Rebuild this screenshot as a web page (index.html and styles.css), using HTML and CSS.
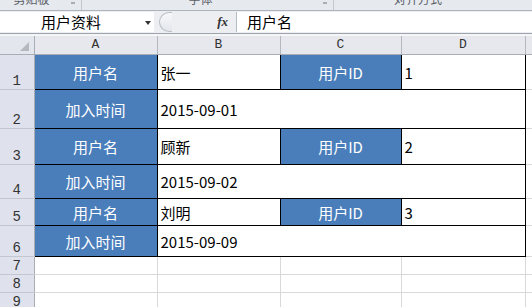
FILE: index.html
```html
<!DOCTYPE html>
<html lang="zh">
<head>
<meta charset="utf-8">
<link rel="stylesheet" href="styles.css">
</head>
<body>
<div class="app">
  <div class="ribbon">
    <div class="group g1"><span class="glabel">剪贴板</span><span class="launch"></span></div>
    <div class="group g2"><span class="glabel">字体</span><span class="launch"></span></div>
    <div class="group g3"><span class="glabel">对齐方式</span></div>
  </div>
  <div class="formula-bar">
    <div class="namebox"><span class="name">用户资料</span><span class="arrow"></span></div>
    <div class="handle"></div>
    <div class="fx">fx</div>
    <div class="input">用户名</div>
  </div>
  <div class="gap"></div>
  <table class="sheet">
    <colgroup>
      <col class="c-hdr"><col class="c-a"><col class="c-b"><col class="c-c"><col class="c-d"><col class="c-e">
    </colgroup>
    <tr class="h-hdr">
      <td class="corner"><span class="tri"></span></td>
      <td class="colhdr">A</td><td class="colhdr">B</td><td class="colhdr">C</td><td class="colhdr">D</td><td class="colhdr last"></td>
    </tr>
    <tr class="h1">
      <td class="rowhdr">1</td>
      <td class="lbl">用户名</td><td class="val">张一</td><td class="lbl">用户ID</td><td class="val">1</td><td class="grid"></td>
    </tr>
    <tr class="h2">
      <td class="rowhdr">2</td>
      <td class="lbl">加入时间</td><td class="val" colspan="3">2015-09-01</td><td class="grid"></td>
    </tr>
    <tr class="h3">
      <td class="rowhdr">3</td>
      <td class="lbl">用户名</td><td class="val">顾新</td><td class="lbl">用户ID</td><td class="val">2</td><td class="grid"></td>
    </tr>
    <tr class="h4">
      <td class="rowhdr">4</td>
      <td class="lbl">加入时间</td><td class="val" colspan="3">2015-09-02</td><td class="grid"></td>
    </tr>
    <tr class="h5">
      <td class="rowhdr">5</td>
      <td class="lbl">用户名</td><td class="val">刘明</td><td class="lbl">用户ID</td><td class="val">3</td><td class="grid"></td>
    </tr>
    <tr class="h6">
      <td class="rowhdr">6</td>
      <td class="lbl">加入时间</td><td class="val" colspan="3">2015-09-09</td><td class="grid"></td>
    </tr>
    <tr class="h7">
      <td class="rowhdr">7</td>
      <td class="grid"></td><td class="grid"></td><td class="grid"></td><td class="grid"></td><td class="grid"></td>
    </tr>
    <tr class="h7">
      <td class="rowhdr">8</td>
      <td class="grid"></td><td class="grid"></td><td class="grid"></td><td class="grid"></td><td class="grid"></td>
    </tr>
    <tr class="h7">
      <td class="rowhdr">9</td>
      <td class="grid"></td><td class="grid"></td><td class="grid"></td><td class="grid"></td><td class="grid"></td>
    </tr>
  </table>
</div>
</body>
</html>
```
FILE: styles.css
```css
html, body {
  margin: 0;
  padding: 0;
  background: #ffffff;
}
.app {
  width: 532px;
  height: 307px;
  overflow: hidden;
  font-family: "Noto Sans CJK SC", sans-serif;
}
.ribbon {
  height: 10px;
  display: flex;
  background: #e6e9ee;
  overflow: hidden;
}
.group {
  position: relative;
  display: flex;
  justify-content: center;
  border-right: 1px solid #c3c8d0;
  overflow: hidden;
}
.g1 { width: 81px; }
.g2 { width: 251px; }
.g3 { flex: 1; border-right: none; padding-right: 30px; }
.glabel {
  font-size: 12px;
  line-height: 12px;
  margin-top: -7px;
  color: #5a5f68;
}
.g1 .glabel { margin-right: 18px; }
.g2 .glabel { margin-right: 14px; }
.launch {
  position: absolute;
  right: 6px;
  top: 2px;
  width: 4px;
  height: 2px;
  background: #a9aeb6;
}
.formula-bar {
  height: 22px;
  display: flex;
  align-items: stretch;
  padding: 1px 0;
  box-sizing: border-box;
  height: 24px;
  background: #eceef2;
  border-top: 1px solid #aeb4bd;
  border-bottom: 1px solid #9ea4ad;
}
.namebox {
  width: 154px;
  background: #ffffff;
  display: flex;
  align-items: center;
  position: relative;
}
.name {
  font-size: 15px;
  line-height: 20px;
  margin-left: 41px;
  color: #000;
}
.arrow {
  position: absolute;
  left: 145px;
  top: 9px;
  border-left: 3.5px solid transparent;
  border-right: 3.5px solid transparent;
  border-top: 4px solid #333;
}
.handle {
  width: 13px;
  margin-left: 5px;
  border: 1px solid #b9bec6;
  border-right: none;
  border-radius: 10px 0 0 10px;
  background: linear-gradient(#f7f8fa, #e3e6eb);
  box-sizing: border-box;
}
.fx {
  width: 64px;
  text-align: right;
  padding-right: 8px;
  box-sizing: border-box;
  font-family: "Liberation Serif", serif;
  font-style: italic;
  font-weight: bold;
  font-size: 13px;
  line-height: 20px;
  color: #333;
}
.input {
  flex: 1;
  background: #ffffff;
  border-left: 1px solid #b6bcc5;
  font-size: 15px;
  line-height: 20px;
  padding-left: 10px;
  color: #000;
}
.gap {
  height: 2px;
  background: #f4f5f7;
}
.sheet {
  border-collapse: collapse;
  table-layout: fixed;
  width: 539px;
}
.c-hdr { width: 34px; }
.c-a { width: 123px; }
.c-b { width: 123px; }
.c-c { width: 121px; }
.c-d { width: 124px; }
.c-e { width: 14px; }
.sheet td {
  padding: 0;
  overflow: hidden;
  white-space: nowrap;
}
.h-hdr { height: 18px; }
.h1 { height: 35px; }
.h2 { height: 39px; }
.h3 { height: 36px; }
.h4 { height: 34px; }
.h5 { height: 27px; }
.h6 { height: 31px; }
.h7 { height: 18px; }
.corner {
  background: #e3e6ec;
  border-right: 1px solid #a9adb5;
  border-bottom: 1px solid #a9adb5;
  position: relative;
}
.tri {
  position: absolute;
  right: 5px;
  bottom: 3px;
  width: 0;
  height: 0;
  border-left: 9px solid transparent;
  border-bottom: 9px solid #b4b8bf;
}
.colhdr {
  background: #e6e8ee;
  border-right: 1px solid #b3b7bf;
  border-bottom: 1px solid #a9adb5;
  text-align: center;
  font-family: "Liberation Mono", monospace;
  font-size: 13px;
  line-height: 16px;
  color: #333;
}
.colhdr.last { border-right: none; }
.rowhdr {
  background: #dfe2ec;
  border-right: 1px solid #a9adb5;
  border-bottom: 1px solid #c3c7d0;
  text-align: center;
  vertical-align: bottom;
  font-family: "Liberation Mono", monospace;
  font-size: 14px;
  line-height: 16px;
  color: #333;
}
.lbl {
  background: #4a7ebb;
  color: #ffffff;
  border: 1px solid #000;
  text-align: center;
  vertical-align: middle;
  font-size: 15px;
  line-height: 18px;
  padding-top: 2px !important;
}
.val {
  background: #ffffff;
  color: #000;
  border: 1px solid #000;
  text-align: left;
  vertical-align: middle;
  font-size: 15px;
  line-height: 18px;
  padding: 2px 0 0 3px !important;
}
.grid {
  border: 1px solid #d9d9d9;
}
```
